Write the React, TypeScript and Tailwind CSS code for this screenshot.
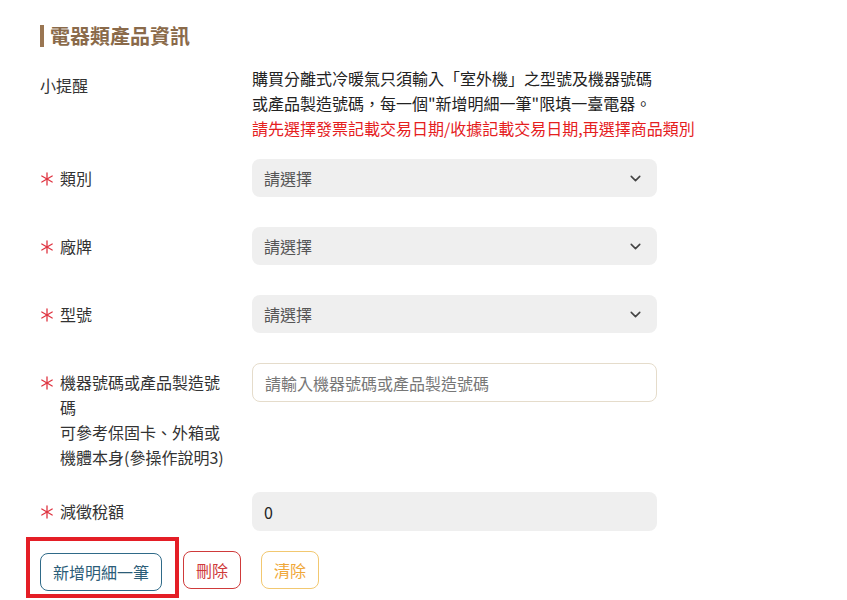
import React from 'react';
import { ChevronDown } from 'lucide-react';

const font = { fontFamily: '"Noto Sans CJK TC", "Noto Sans", sans-serif' };

function Star() {
  return (
    <svg viewBox="0 0 14 14" className="mt-[6px] h-[14px] w-[14px] shrink-0" stroke="#df3340" strokeWidth="1.3" strokeLinecap="round">
      <line x1="7" y1="1" x2="7" y2="13" />
      <line x1="1.8" y1="4" x2="12.2" y2="10" />
      <line x1="1.8" y1="10" x2="12.2" y2="4" />
    </svg>
  );
}

function Required({ children }: { children: React.ReactNode }) {
  return (
    <div className="flex items-start text-[16px] leading-[25px] text-[#333]">
      <Star />
      <span className="ml-[6px] w-[170px]">{children}</span>
    </div>
  );
}

function SelectBox() {
  return (
    <div className="flex h-[38px] w-[405px] items-center justify-between rounded-lg bg-[#efefef] pl-3 pr-[13px] text-[16px] text-[#555]">
      <span>請選擇</span>
      <ChevronDown className="h-[17px] w-[17px] text-[#444]" strokeWidth={2.2} />
    </div>
  );
}

export default function App() {
  return (
    <div className="min-h-[600px] bg-white pl-10 pt-[22px]" style={font}>
      {/* Title */}
      <div className="flex items-center">
        <span className="mr-[6px] h-[22px] w-[4px] bg-[#9a7652]" />
        <h2 className="text-[20px] leading-[28px] font-bold text-[#8a6a4a]">電器類產品資訊</h2>
      </div>

      {/* Tip */}
      <div className="mt-[16px] flex">
        <div className="w-[212px] pt-[7px] text-[16px] text-[#333]">小提醒</div>
        <div className="text-[16px] leading-[25px] text-[#222]">
          <p>購買分離式冷暖氣只須輸入「室外機」之型號及機器號碼</p>
          <p>或產品製造號碼，每一個"新增明細一筆"限填一臺電器。</p>
          <p className="text-[#e5201e]">請先選擇發票記載交易日期/收據記載交易日期,再選擇商品類別</p>
        </div>
      </div>

      <div className="mt-[18px] flex items-center">
        <div className="w-[212px]"><Required>類別</Required></div>
        <SelectBox />
      </div>
      <div className="mt-[30px] flex items-center">
        <div className="w-[212px]"><Required>廠牌</Required></div>
        <SelectBox />
      </div>
      <div className="mt-[30px] flex items-center">
        <div className="w-[212px]"><Required>型號</Required></div>
        <SelectBox />
      </div>

      <div className="mt-[30px] flex items-start">
        <div className="w-[212px] pt-[7px]">
          <Required>
            機器號碼或產品製造號碼
            <br />
            可參考保固卡、外箱或
            <br />
            機體本身(參操作說明3)
          </Required>
        </div>
        <div className="flex h-[39px] w-[405px] items-center rounded-lg border border-[#e5dccb] bg-white px-3 text-[16px] text-[#777]">
          請輸入機器號碼或產品製造號碼
        </div>
      </div>

      <div className="mt-[22px] flex items-center">
        <div className="w-[212px]"><Required>減徵稅額</Required></div>
        <div className="flex h-[39px] w-[405px] items-center rounded-lg bg-[#efefef] px-3 text-[16px] text-[#222]">0</div>
      </div>

      <div className="mt-[6px] flex items-center">
        <div className="-ml-[14px] border-[4px] border-[#e41e26] pb-[3px] pl-[10px] pr-[13px] pt-[12px]">
          <button className="h-[38px] rounded-lg border border-[#2f6a88] px-[12px] text-[16px] text-[#2c5d78]">新增明細一筆</button>
        </div>
        <button className="ml-[4px] mt-[5px] h-[38px] rounded-lg border border-[#cf3a3a] px-[12px] text-[16px] text-[#cf3a3a]">刪除</button>
        <button className="ml-[20px] mt-[5px] h-[38px] rounded-lg border border-[#f2c870] px-[12px] text-[16px] text-[#f0a83a]">清除</button>
      </div>
    </div>
  );
}
